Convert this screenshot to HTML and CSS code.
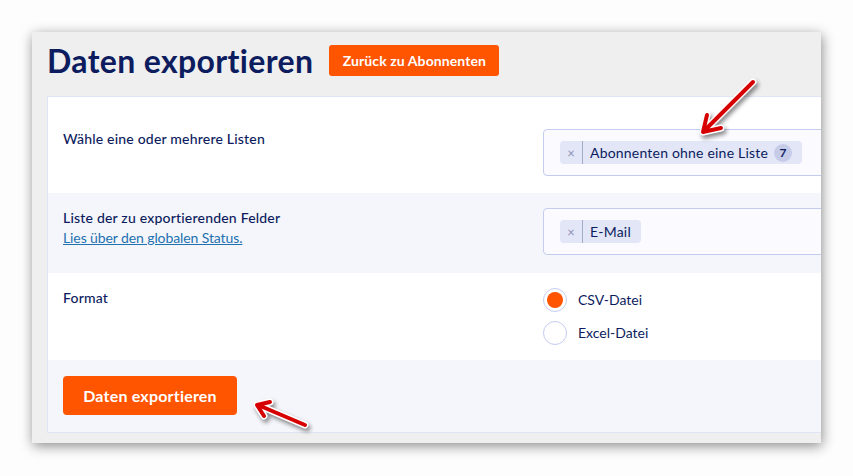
FILE: index.html
```html
<!DOCTYPE html>
<html lang="de">
<head>
<meta charset="utf-8">
<title>Daten exportieren</title>
<link rel="stylesheet" href="styles.css">
</head>
<body>
<div class="frame">
  <div class="head">
    <h1 class="title">Daten exportieren</h1>
    <a class="btn btn-small" href="#">Zurück zu Abonnenten</a>
  </div>
  <div class="card">
    <div class="row row-first">
      <div class="label">Wähle eine oder mehrere Listen</div>
      <div class="field">
        <div class="select">
          <span class="tag"><span class="tag-x">×</span><span class="tag-text">Abonnenten ohne eine Liste <span class="badge">7</span></span></span>
        </div>
      </div>
    </div>
    <div class="row row-alt row-second">
      <div class="label">Liste der zu exportierenden Felder<br><a class="link" href="#">Lies über den globalen Status.</a></div>
      <div class="field">
        <div class="select">
          <span class="tag"><span class="tag-x">×</span><span class="tag-text">E-Mail</span></span>
        </div>
      </div>
    </div>
    <div class="row row-third">
      <div class="label">Format</div>
      <div class="field radios">
        <label class="radio"><span class="dot checked"></span>CSV-Datei</label>
        <label class="radio"><span class="dot"></span>Excel-Datei</label>
      </div>
    </div>
    <div class="row row-alt row-foot">
      <a class="btn btn-big" href="#">Daten exportieren</a>
    </div>
  </div>
</div>
<svg class="arrows" width="853" height="476" viewBox="0 0 853 476" xmlns="http://www.w3.org/2000/svg">
  <g class="arrow-outline" fill="none" stroke="#ffffff" stroke-width="7" stroke-linecap="round" stroke-linejoin="round">
    <path d="M753 82 L704 131 M707 115 L703 132 L721 128"/>
    <path d="M305 425 L258 405 M270 402 L257 405 L264 416"/>
  </g>
  <g fill="none" stroke="#d60000" stroke-width="4" stroke-linecap="round" stroke-linejoin="round">
    <path d="M753 82 L704 131 M707 115 L703 132 L721 128"/>
    <path d="M305 425 L258 405 M270 402 L257 405 L264 416"/>
  </g>
</svg>
</body>
</html>
```

FILE: styles.css
```css
* { box-sizing: border-box; }
html, body { margin: 0; padding: 0; }
body {
  background: #fdfdfd;
  width: 853px;
  height: 476px;
  overflow: hidden;
  position: relative;
  font-family: Lato, "Noto Sans", sans-serif;
  color: #0c1c5e;
}
.frame {
  margin: 32px 0 0 32px;
  width: 789px;
  height: 411px;
  background: #efefef;
  overflow: hidden;
  box-shadow: 1px 3px 12px rgba(0,0,0,0.45);
  padding: 0 0 0 15px;
}
.head {
  display: flex;
  align-items: center;
  height: 56px;
  gap: 16px;
  margin-bottom: 8px;
}
.title {
  margin: 0;
  font-size: 32px;
  font-weight: 700;
  color: #0c1c5e;
  letter-spacing: 0.35px;
}
.btn {
  display: inline-flex;
  align-items: center;
  justify-content: center;
  background: #ff5400;
  color: #fff;
  text-decoration: none;
  font-weight: 700;
  border-radius: 4px;
}
.btn-small {
  width: 170px;
  height: 31px;
  font-size: 14px;
  border-radius: 3px;
  letter-spacing: 0.1px;
}
.btn-big {
  width: 174px;
  height: 39px;
  font-size: 16px;
  letter-spacing: 0.2px;
}
.card {
  width: 900px;
  border: 1px solid #dfe5f5;
  background: #fff;
}
.row {
  display: grid;
  grid-template-columns: 480px 1fr;
  padding: 0 15px;
  font-size: 14px;
  line-height: 20px;
}
.row-alt { background: #f5f6fb; }
.row-first { height: 96px; padding-top: 32px; }
.row-second { height: 80px; padding-top: 15px; }
.row-third { height: 87px; padding-top: 15px; }
.row-foot { display: block; height: 72px; padding-top: 16px; }
.label { font-weight: 500; color: #0c1c5e; letter-spacing: 0.2px; }
.link { color: #2271b1; text-decoration: underline; font-weight: 400; letter-spacing: -0.1px; }
.select {
  width: 400px;
  height: 47px;
  border: 1px solid #c4ccef;
  border-radius: 4px;
  background: #fbfbff;
  display: flex;
  align-items: center;
  padding: 0 16px;
}
.tag {
  display: inline-flex;
  align-items: center;
  height: 23px;
  background: #e2e6f7;
  border-radius: 4px;
  color: #0c1c5e;
  font-size: 14px;
  letter-spacing: 0.2px;
}
.tag-x {
  width: 23px;
  height: 23px;
  display: inline-flex;
  align-items: center;
  justify-content: center;
  color: #8d93b5;
  font-size: 13px;
  border-right: 1px solid #a4abc6;
}
.tag-text {
  display: inline-flex;
  align-items: center;
  gap: 6px;
  padding: 0 10px 0 7px;
}
.badge {
  width: 18px;
  height: 18px;
  border-radius: 50%;
  background: #c6cce8;
  display: inline-flex;
  align-items: center;
  justify-content: center;
  font-size: 12px;
  font-weight: 700;
  letter-spacing: 0;
}
.radios {
  display: flex;
  flex-direction: column;
  gap: 9px;
}
.radio {
  display: flex;
  align-items: center;
  gap: 11px;
  height: 24px;
  color: #0c1c5e;
}
.dot {
  width: 24px;
  height: 24px;
  border-radius: 50%;
  border: 1px solid #c4ccef;
  background: #fff;
  display: inline-block;
  position: relative;
}
.dot.checked::after {
  content: "";
  position: absolute;
  left: 3px;
  top: 3px;
  width: 16px;
  height: 16px;
  border-radius: 50%;
  background: #ff5400;
}
.arrows {
  position: absolute;
  left: 0;
  top: 0;
  pointer-events: none;
  filter: drop-shadow(2px 3px 2px rgba(0,0,0,0.45));
}
```
